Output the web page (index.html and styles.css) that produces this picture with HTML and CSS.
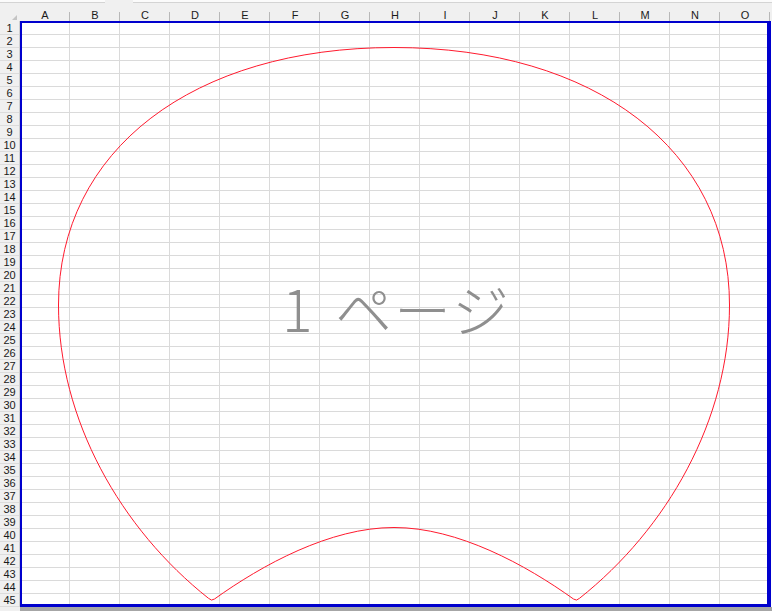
FILE: index.html
```html
<!DOCTYPE html>
<html lang="ja">
<head>
    <meta charset="UTF-8">
    <title>改ページプレビュー</title>
    <link rel="stylesheet" href="styles.css">
</head>
<body>
    <div class="sheet">
        <div class="topbar">
            <div class="tab tab-left"></div>
            <div class="tab tab-right"></div>
        </div>

        <div class="colhead">
            <div class="corner"></div>
            <div class="col">A</div>
            <div class="col">B</div>
            <div class="col">C</div>
            <div class="col">D</div>
            <div class="col">E</div>
            <div class="col">F</div>
            <div class="col">G</div>
            <div class="col">H</div>
            <div class="col">I</div>
            <div class="col">J</div>
            <div class="col">K</div>
            <div class="col">L</div>
            <div class="col">M</div>
            <div class="col">N</div>
            <div class="col">O</div>
            <div class="col-rest"></div>
        </div>

        <div class="main">
            <div class="rowhead">
                <div class="rh">1</div><div class="rh">2</div><div class="rh">3</div><div class="rh">4</div><div class="rh">5</div>
                <div class="rh">6</div><div class="rh">7</div><div class="rh">8</div><div class="rh">9</div><div class="rh">10</div>
                <div class="rh">11</div><div class="rh">12</div><div class="rh">13</div><div class="rh">14</div><div class="rh">15</div>
                <div class="rh">16</div><div class="rh">17</div><div class="rh">18</div><div class="rh">19</div><div class="rh">20</div>
                <div class="rh">21</div><div class="rh">22</div><div class="rh">23</div><div class="rh">24</div><div class="rh">25</div>
                <div class="rh">26</div><div class="rh">27</div><div class="rh">28</div><div class="rh">29</div><div class="rh">30</div>
                <div class="rh">31</div><div class="rh">32</div><div class="rh">33</div><div class="rh">34</div><div class="rh">35</div>
                <div class="rh">36</div><div class="rh">37</div><div class="rh">38</div><div class="rh">39</div><div class="rh">40</div>
                <div class="rh">41</div><div class="rh">42</div><div class="rh">43</div><div class="rh">44</div><div class="rh">45</div>
            </div>
            <div class="page"></div>
            <div class="page-rest"></div>
        </div>

        <div class="footer">
            <div class="footer-left"></div>
            <div class="footer-bar"></div>
        </div>

        <!-- uchiwa outline drawn over the cells -->
        <svg class="fan" width="772" height="611" viewBox="0 0 772 611">
            <path d="M 58.5 305
                     C 58.5 150, 193 47.5, 394 47.5
                     C 595 47.5, 729.5 150, 729.5 305
                     C 729.5 420, 667 529, 579.5 598.3
                     Q 576.5 601.5, 573.5 599
                     C 526 565, 458 527.5, 394 527.5
                     C 330 527.5, 262 565, 214.5 599
                     Q 211.5 601.5, 208.5 598.3
                     C 121 529, 58.5 420, 58.5 305 Z"
                  fill="none" stroke="#ff1a2e" stroke-width="1" stroke-linejoin="round"/>
        </svg>

        <div class="watermark">1 ページ</div>
    </div>
</body>
</html>
```

FILE: styles.css
```css
* {
    margin: 0;
    padding: 0;
    box-sizing: border-box;
}

body {
    background: #ffffff;
    font-family: "Liberation Sans", "DejaVu Sans", sans-serif;
    font-size: 11px;
    color: #000000;
    overflow: hidden;
}

.sheet {
    position: relative;
    width: 772px;
    height: 611px;
}

/* strip left over from the formula bar */
.topbar {
    height: 8px;
    background: #f0f0f0;
    display: flex;
    gap: 28px;
}

.tab {
    height: 3px;
    background: #fbfbfb;
    border-bottom: 1px solid #d4d4d4;
}

.tab-left {
    width: 105px;
}

.tab-right {
    flex: 1;
}

/* column header */
.colhead {
    display: flex;
    height: 13px;
    background: #f0f0f0;
}

.corner {
    width: 20px;
    position: relative;
}

.corner::after {
    content: "";
    position: absolute;
    right: 3px;
    bottom: 1px;
    border-left: 5px solid transparent;
    border-bottom: 5px solid #c4c4c4;
}

.col {
    width: 50px;
    position: relative;
    text-align: center;
    line-height: 13px;
    padding-top: 1px;
    color: #1a1a1a;
}

.col::after {
    content: "";
    position: absolute;
    right: 0;
    top: 4px;
    bottom: 0;
    width: 1px;
    background: #b8b8b8;
}

.col-rest {
    flex: 1;
}

/* rows */
.main {
    display: flex;
    height: 586px;
}

.rowhead {
    width: 20px;
    padding-top: 1px;
    background: #f0f0f0;
    border-right: 1px solid #cfcfcf;
}

.rh {
    height: 13px;
    line-height: 12px;
    text-align: center;
    border-bottom: 1px solid #dcdcdc;
    font-size: 11px;
    color: #1a1a1a;
}

.page {
    width: 751px;
    border-style: solid;
    border-color: #0000cd;
    border-width: 2px 4px 3px 2px;
    background-color: #ffffff;
    background-image:
        linear-gradient(to right, transparent 49px, #dadada 49px),
        linear-gradient(to bottom, transparent 12px, #dadada 12px);
    background-size: 50px 100%, 100% 13px;
    background-position: -2px 0, 0 -1px;
}

.page-rest {
    flex: 1;
    background: #ffffff;
}

.footer {
    display: flex;
    height: 4px;
}

.footer-left {
    width: 20px;
    background: #f0f0f0;
}

.footer-bar {
    flex: 1;
    background: #a6a6a6;
}

.fan {
    position: absolute;
    left: 0;
    top: 0;
    pointer-events: none;
}

.watermark {
    position: absolute;
    left: 282px;
    top: 279px;
    font-family: "Noto Sans CJK JP", sans-serif;
    font-size: 57px;
    font-weight: 300;
    line-height: 57px;
    letter-spacing: 2px;
    word-spacing: 6px;
    color: #8f8f8f;
    white-space: pre;
}
```
